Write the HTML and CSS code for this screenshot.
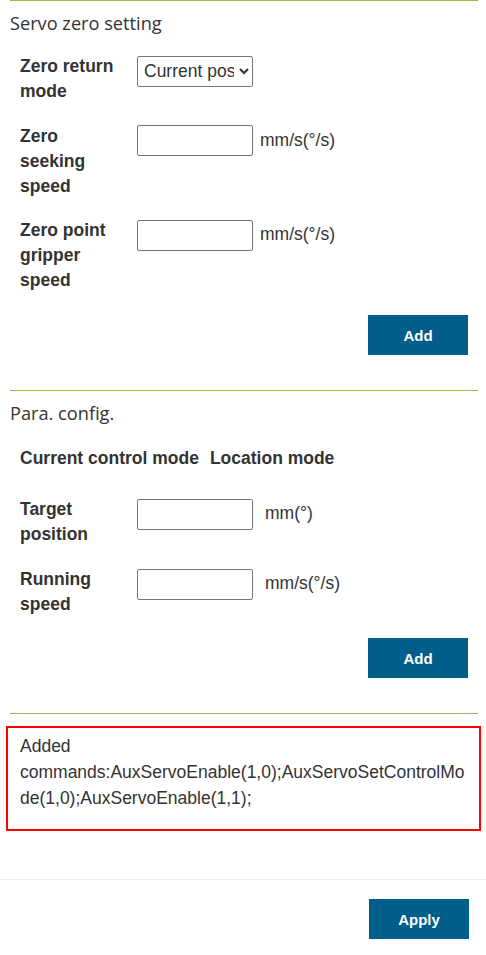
FILE: index.html
```html
<!DOCTYPE html>
<html>
<head>
<meta charset="utf-8">
<link rel="stylesheet" href="styles.css">
</head>
<body>
<div class="page">
  <section class="section">
    <div class="section-title">Servo zero setting</div>
    <div class="form">
      <div class="row row-first">
        <div class="label">Zero return mode</div>
        <select class="control select"><option>Current position</option></select>
      </div>
      <div class="row">
        <div class="label">Zero seeking speed</div>
        <input class="control" type="text">
        <span class="unit">mm/s(°/s)</span>
      </div>
      <div class="row">
        <div class="label">Zero point gripper speed</div>
        <input class="control" type="text">
        <span class="unit">mm/s(°/s)</span>
      </div>
    </div>
    <div class="actions"><button class="btn">Add</button></div>
  </section>

  <section class="section">
    <div class="section-title">Para. config.</div>
    <div class="mode-line"><span class="mode-label">Current control mode</span><span>Location mode</span></div>
    <div class="form form-two">
      <div class="row">
        <div class="label">Target position</div>
        <input class="control" type="text">
        <span class="unit unit-wide">mm(°)</span>
      </div>
      <div class="row">
        <div class="label">Running speed</div>
        <input class="control" type="text">
        <span class="unit unit-wide">mm/s(°/s)</span>
      </div>
    </div>
    <div class="actions actions-two"><button class="btn">Add</button></div>
  </section>

  <section class="section section-last">
    <div class="commands">Added commands:AuxServoEnable(1,0);AuxServoSetControlMode(1,0);AuxServoEnable(1,1);</div>
  </section>
</div>
<footer class="footer">
  <button class="btn btn-apply">Apply</button>
</footer>
</body>
</html>
```

FILE: styles.css
```css
html, body {
  margin: 0;
  padding: 0;
  background: #fff;
}
body {
  font-family: "Liberation Sans", Arial, sans-serif;
  color: #333;
  font-size: 17.5px;
}
.page {
  padding: 0 8px 0 10px;
}
.section {
  border-top: 1px solid #8cc63f;
}
.section-title {
  font-family: "Open Sans", "Noto Sans", sans-serif;
  font-size: 18.2px;
  line-height: 24px;
  padding-top: 9.5px;
  color: #333;
}
.form {
  display: flex;
  flex-direction: column;
  gap: 19.5px;
  padding-left: 10px;
  margin-top: 19.5px;
}
.form-two {
  margin-top: 26px;
  gap: 20px;
}
.row {
  display: flex;
  align-items: flex-start;
}
.label {
  width: 96px;
  margin-right: 21px;
  font-weight: bold;
  line-height: 25px;
  color: #333;
}
.control {
  box-sizing: border-box;
  width: 116px;
  height: 31px;
  margin: 1.5px 0 0 0;
  border: 1px solid #767676;
  border-radius: 2px;
  padding: 0 4px;
  font-family: "Liberation Sans", Arial, sans-serif;
  font-size: 17.5px;
  color: #333;
  background: #fff;
}
.select {
  padding: 0 2px;
}
.unit {
  margin-left: 7px;
  line-height: 31px;
  margin-top: 1px;
  color: #333;
}
.unit-wide {
  margin-left: 12px;
}
.actions {
  display: flex;
  justify-content: flex-end;
  padding-right: 10px;
  margin-top: 22px;
  padding-bottom: 35px;
}
.actions-two {
  margin-top: 21px;
}
.btn {
  width: 100px;
  height: 40px;
  border: none;
  background: #005e8a;
  color: #fff;
  font-family: "Liberation Sans", Arial, sans-serif;
  font-weight: bold;
  font-size: 15px;
  padding: 0;
}
.mode-line {
  margin-top: 21.5px;
  padding-left: 10px;
  font-weight: bold;
  line-height: 25px;
}
.mode-label {
  margin-right: 11px;
}
.section-last {
  border-top-color: #95b85c;
  padding-top: 12px;
  padding-bottom: 48px;
}
.commands {
  margin: 0 -3px 0 -4px;
  border: 2px solid #f00;
  padding: 5px 12px 18px 12px;
  line-height: 26px;
  overflow-wrap: anywhere;
  color: #333;
}
.footer {
  border-top: 1px solid #eee;
  display: flex;
  justify-content: flex-end;
  padding: 19px 17px 16px 0;
}
```
